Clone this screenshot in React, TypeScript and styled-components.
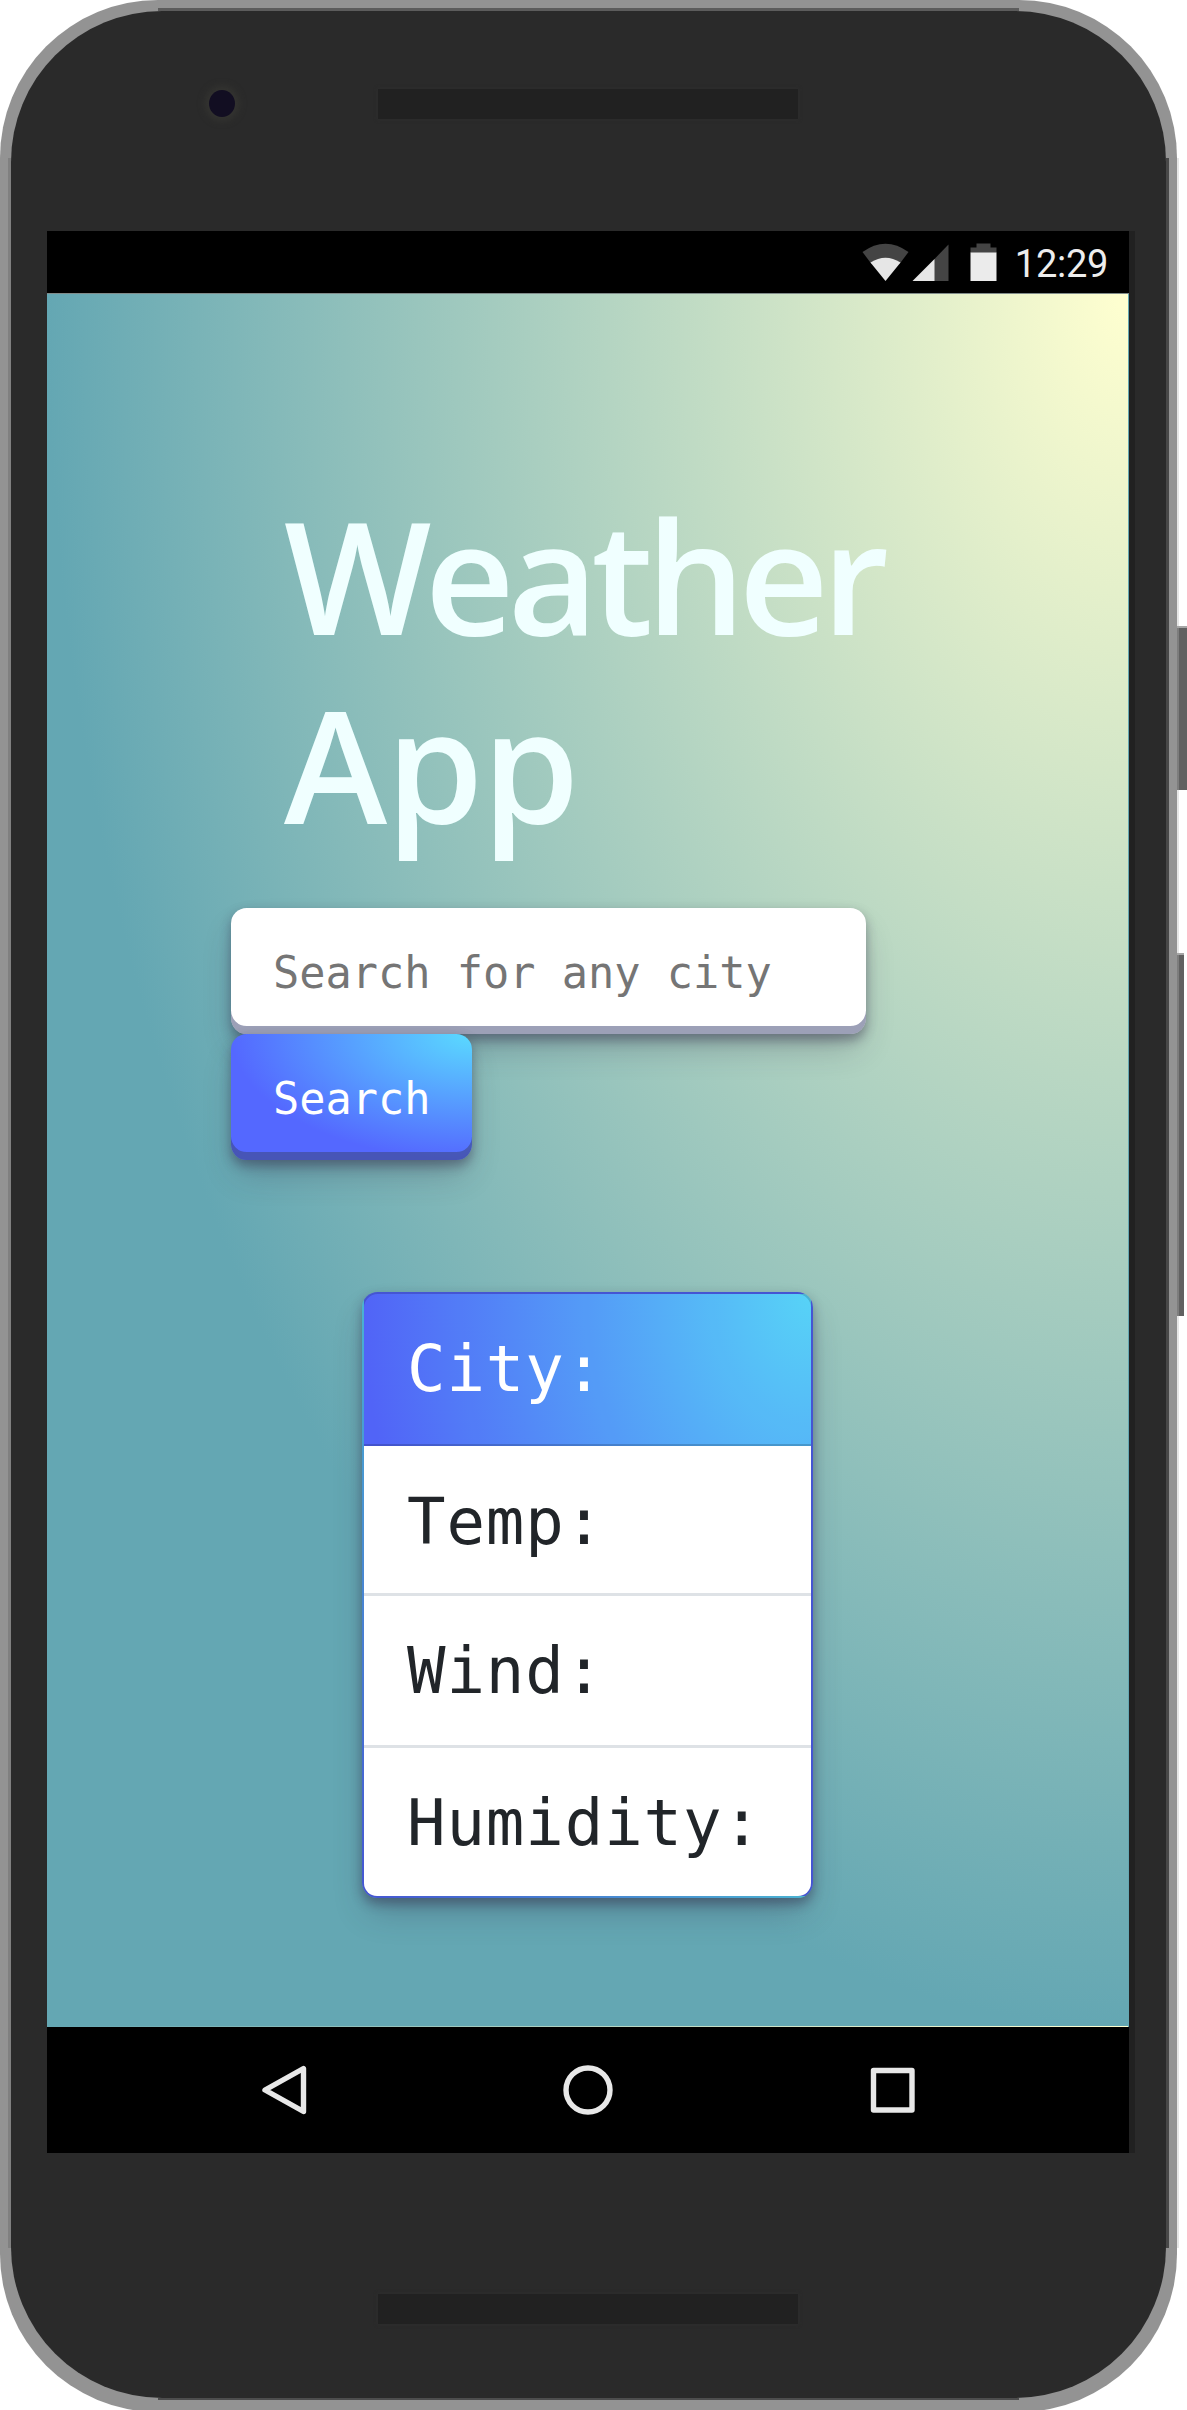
import React from "react";
import styled, { createGlobalStyle } from "styled-components";

const GlobalStyle = createGlobalStyle`
  *, *::before, *::after { box-sizing: border-box; }
  html, body { margin: 0; padding: 0; background: #fff; }
  body { overflow: hidden; }
`;

const mono = `"DejaVu Sans Mono", "Liberation Mono", monospace`;

const Stage = styled.div`
  display: flex;
  width: 1187px;
  height: 2410px;
  overflow: hidden;
`;

const Frame = styled.div`
  flex: none;
  width: 1177px;
  height: 2412px;
  padding: 11px 11px 14px;
  border-radius: 158px;
  background:
    linear-gradient(#5c5c5c, #5c5c5c) 158px 8px / 861px 3px no-repeat,
    linear-gradient(#808080, #808080) 8px 158px / 3px 2090px no-repeat,
    linear-gradient(#484848, #484848) 1166px 158px / 3px 2090px no-repeat,
    linear-gradient(#4d4d4d, #4d4d4d) 158px 2398px / 861px 2px no-repeat,
    #939393;
`;

const Body = styled.div`
  display: flex;
  flex-direction: column;
  height: 2387px;
  border-radius: 151px;
  background: #2a2a2a;
`;

const TopBezel = styled.div`
  display: flex;
  align-items: center;
  height: 220px;
  padding: 0 0 35px 198px;
`;

const Camera = styled.div`
  width: 26px;
  height: 27px;
  border-radius: 50%;
  background: #120e22;
  box-shadow: 0 0 7px 4px #343431;
`;

const Speaker = styled.div<{ $gap?: number }>`
  width: 420px;
  height: 30px;
  margin-left: ${(p) => p.$gap ?? 0}px;
  background: #212121;
  box-shadow: 0 0 3px 1px #2d2d2d;
`;

const BottomBezel = styled.div`
  display: flex;
  padding: 141px 0 0 367px;
`;

const Screen = styled.div`
  display: flex;
  flex-direction: column;
  width: 1082px;
  height: 1922px;
  margin-left: 36px;
  box-shadow: 6px 0 0 #212121;
`;

const StatusBar = styled.div`
  display: flex;
  align-items: center;
  justify-content: flex-end;
  height: 63px;
  padding-right: 21px;
  background: #000;
  border-bottom: 1px solid #808b8a;
`;

const Clock = styled.span`
  margin-left: 18px;
  padding-top: 3px;
  font: 450 38px/60px Roboto, sans-serif;
  letter-spacing: -0.3px;
  color: #ededed;
`;

const Main = styled.main`
  display: flex;
  flex-direction: column;
  height: 1733px;
  background-image: radial-gradient(100% 100% at 100% 0, #ffffd0 0, #64a7b3 100%);
  background-size: 1081px 1732px;
`;

const Title = styled.h1`
  width: 640px;
  margin: 186px 0 0 237px;
  font: 575 156px/189px "Open Sans", "Noto Sans", sans-serif;
  letter-spacing: -1px;
  color: azure;
  &::first-line { letter-spacing: -6.8px; }
`;

const SearchForm = styled.form`
  display: flex;
  flex-direction: column;
  align-items: flex-start;
  margin: 50px 0 0 184px;
`;

const raised = `
  height: 126px;
  padding: 3px 42px 0;
  border: 0;
  border-radius: 15.75px;
  font-family: ${mono};
  font-size: 43.6px;
  box-shadow:
    rgba(45, 35, 66, 0.4) 0 5.25px 10.5px,
    rgba(45, 35, 66, 0.3) 0 18.4px 34px -7.9px,
    rgba(58, 65, 111, 0.5) 0 -7.9px 0 inset;
`;

const SearchInput = styled.input`
  ${raised}
  width: 635px;
  background: #fff;
  outline: 0;
  &::placeholder { color: #757575; opacity: 1; }
`;

const SearchButton = styled.button`
  ${raised}
  width: 241px;
  white-space: nowrap;
  color: #fff;
  background-image: radial-gradient(100% 100% at 100% 0, #5adaff 0, #5468ff 100%);
`;

const Card = styled.section`
  width: 451px;
  margin: 132px 0 0 315px;
  border: 2px solid rgba(0, 0, 0, 0.176);
  border-radius: 15.75px;
  background-image: radial-gradient(100% 100% at 100% 0, #5adaff 0, #5468ff 100%);
  box-shadow:
    rgba(45, 35, 66, 0.4) 0 5.25px 10.5px,
    rgba(45, 35, 66, 0.3) 0 18.4px 34px -7.9px,
    rgba(58, 65, 111, 0.5) 0 -7.9px 0 inset;
`;

const rowText = `
  padding-left: 43px;
  font-family: ${mono};
  font-size: 64px;
  letter-spacing: 0.9px;
`;

const CardHeader = styled.div`
  ${rowText}
  height: 152px;
  line-height: 150px;
  color: #fff;
  background: rgba(0, 0, 0, 0.03);
  border-bottom: 2px solid rgba(0, 0, 0, 0.176);
  border-radius: 13px 13px 0 0;
`;

const List = styled.ul`
  margin: 0;
  padding: 0;
  list-style: none;
  background: #fff;
  border-radius: 0 0 13px 13px;
`;

const Item = styled.li<{ $h: number; $line: number }>`
  ${rowText}
  height: ${(p) => p.$h}px;
  line-height: ${(p) => p.$line}px;
  color: #212529;
  border-bottom: 3px solid #dee2e6;
  &:last-child { border-bottom: 0; }
`;

const NavBar = styled.nav`
  display: flex;
  align-items: center;
  height: 126px;
  background: #000;
`;

const NavIcon = styled.svg<{ $gap: number }>`
  flex: none;
  width: 52px;
  height: 52px;
  margin-left: ${(p) => p.$gap}px;
  fill: none;
  stroke: #e8e8e8;
  stroke-width: 5.4;
  stroke-linejoin: round;
`;

const SideRail = styled.div`
  flex: none;
  width: 10px;
  padding-top: 158px;
  background: linear-gradient(#e6e6e6, #e6e6e6) 0 158px / 2px 2090px no-repeat;
`;

const SideKey = styled.div<{ $w: number; $h: number; $top: number }>`
  width: ${(p) => p.$w}px;
  height: ${(p) => p.$h}px;
  margin-top: ${(p) => p.$top}px;
  background: linear-gradient(90deg, #7d7d7d 2px, #616161 2px);
  border-top: 2px solid #a6a6a6;
`;

const readings = [
  { label: "Temp:", height: 150, line: 152 },
  { label: "Wind:", height: 152, line: 150 },
  { label: "Humidity:", height: 148, line: 150 },
];

export default function App() {
  return (
    <>
      <GlobalStyle />
      <Stage>
        <Frame>
          <Body>
            <TopBezel>
              <Camera />
              <Speaker $gap={143} />
            </TopBezel>
            <Screen>
              <StatusBar>
                <svg width="136" height="40" viewBox="0 0 136 40">
                  <path d="M1.500 10Q24.500 -6.500 47.500 10L38.500 22H10.500Z" fill="#444" />
                  <path d="M9.500 20.500Q24.500 11 39.500 20.500L24.500 39Z" fill="#e6e6e6" />
                  <path d="M87.500 2.500V39H73V17.500Z" fill="#444" />
                  <path d="M73.500 17V39H51.500Z" fill="#e6e6e6" />
                  <path d="M109.500 5.500h6V1.500h14v4h6V11h-26z" fill="#444" />
                  <path d="M109.500 10.500h26V39h-26z" fill="#ebebeb" />
                </svg>
                <Clock>12:29</Clock>
              </StatusBar>
              <Main>
                <Title>Weather App</Title>
                <SearchForm onSubmit={(e) => e.preventDefault()}>
                  <SearchInput placeholder="Search for any city" />
                  <SearchButton>Search</SearchButton>
                </SearchForm>
                <Card>
                  <CardHeader>City:</CardHeader>
                  <List>
                    {readings.map((r) => (
                      <Item key={r.label} $h={r.height} $line={r.line}>
                        {r.label}
                      </Item>
                    ))}
                  </List>
                </Card>
              </Main>
              <NavBar>
                <NavIcon $gap={212} viewBox="0 0 52 52">
                  <path d="M44.500 4.500V47.500L6 26Z" />
                </NavIcon>
                <NavIcon $gap={250} viewBox="0 0 52 52">
                  <circle cx="27" cy="26" r="22" />
                </NavIcon>
                <NavIcon $gap={253} viewBox="0 0 52 52">
                  <rect x="7.500" y="6.500" width="38.500" height="39.500" />
                </NavIcon>
              </NavBar>
            </Screen>
            <BottomBezel>
              <Speaker />
            </BottomBezel>
          </Body>
        </Frame>
        <SideRail>
          <SideKey $w={10} $h={164} $top={468} />
          <SideKey $w={7} $h={363} $top={163} />
        </SideRail>
      </Stage>
    </>
  );
}
